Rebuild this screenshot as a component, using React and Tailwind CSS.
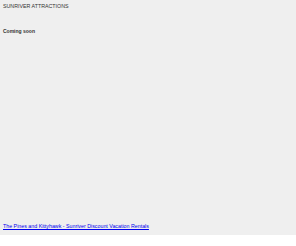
export default function App() {
  return (
    <div className="bg-[#efefef] h-[235px] flex flex-col px-[3px] pt-[3px] text-[5.3px] leading-[7px] text-[#333] font-['Liberation_Sans',Arial,sans-serif]">
      <h1 className="font-normal">SUNRIVER ATTRACTIONS</h1>
      <p className="mt-[18px] font-bold text-[5px]">Coming soon</p>
      <div className="mt-auto mb-[5px]">
        <a href="#" className="text-[#0000ee] underline">
          The Pines and Kittyhawk - Sunriver Discount Vacation Rentals
        </a>
      </div>
    </div>
  );
}
